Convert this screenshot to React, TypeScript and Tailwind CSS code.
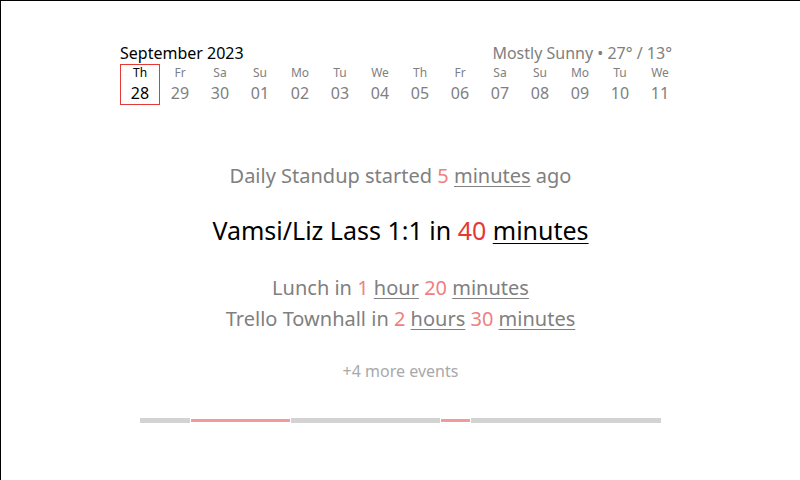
import React from 'react';

const days = [
  { d: 'Th', n: '28', today: true },
  { d: 'Fr', n: '29' },
  { d: 'Sa', n: '30' },
  { d: 'Su', n: '01' },
  { d: 'Mo', n: '02' },
  { d: 'Tu', n: '03' },
  { d: 'We', n: '04' },
  { d: 'Th', n: '05' },
  { d: 'Fr', n: '06' },
  { d: 'Sa', n: '07' },
  { d: 'Su', n: '08' },
  { d: 'Mo', n: '09' },
  { d: 'Tu', n: '10' },
  { d: 'We', n: '11' },
];

// timeline segments: width in px, busy = red
const segments = [
  { w: 50, busy: false },
  { w: 99, busy: true },
  { w: 149, busy: false },
  { w: 29, busy: true },
  { w: 190, busy: false },
];

const U: React.FC<{ children: React.ReactNode }> = ({ children }) => (
  <span className="underline decoration-1 underline-offset-[3px]">{children}</span>
);

export default function App() {
  return (
    <div
      className="w-[800px] h-[480px] border-t border-l border-black bg-white overflow-hidden"
      style={{ fontFamily: '"Noto Sans", "Open Sans", sans-serif' }}
    >
      <div className="w-[560px] ml-[119px] pt-[41px]">
        <div className="flex justify-between items-end pr-2">
          <div className="text-[16px] leading-[22px] text-black">September 2023</div>
          <div className="text-[16px] leading-[22px] text-[#808080]">Mostly Sunny • 27° / 13°</div>
        </div>
        <div className="flex">
          {days.map((x, i) => (
            <div
              key={i}
              className={`w-10 h-[41px] flex flex-col items-center ${x.today ? 'border border-[#e53935] text-black' : 'border border-transparent text-[#808080]'}`}
            >
              <span className="text-[12px] leading-[14px] mt-[1px]">{x.d}</span>
              <span className="text-[16px] leading-[22px] mt-[2px]">{x.n}</span>
            </div>
          ))}
        </div>
      </div>

      <div className="flex flex-col items-center mt-[57px]">
        <div className="text-[20px] leading-[28px] text-[#808080]">
          Daily Standup started <span className="text-[#f08080]">5</span> <U>minutes</U> ago
        </div>
        <div className="text-[25px] leading-[34px] text-black mt-[23px]">
          Vamsi/Liz Lass 1:1 in <span className="text-[#e53935]">40</span> <U>minutes</U>
        </div>
        <div className="text-[20px] leading-[31px] text-[#808080] mt-[25px]">
          Lunch in <span className="text-[#f08080]">1</span> <U>hour</U> <span className="text-[#f08080]">20</span> <U>minutes</U>
        </div>
        <div className="text-[20px] leading-[31px] text-[#808080]">
          Trello Townhall in <span className="text-[#f08080]">2</span> <U>hours</U> <span className="text-[#f08080]">30</span> <U>minutes</U>
        </div>
        <div className="text-[16px] leading-[20px] text-[#a9a9a9] mt-[27px]">+4 more events</div>

        <div className="flex items-center h-[5px] mt-[37px]">
          {segments.map((s, i) => (
            <div
              key={i}
              className={`${s.busy ? 'h-[3px] bg-[#f09a9a]' : 'h-[5px] bg-[#d3d3d3]'} ${i < segments.length - 1 ? 'mr-[1px]' : ''}`}
              style={{ width: s.w }}
            />
          ))}
        </div>
      </div>
    </div>
  );
}
